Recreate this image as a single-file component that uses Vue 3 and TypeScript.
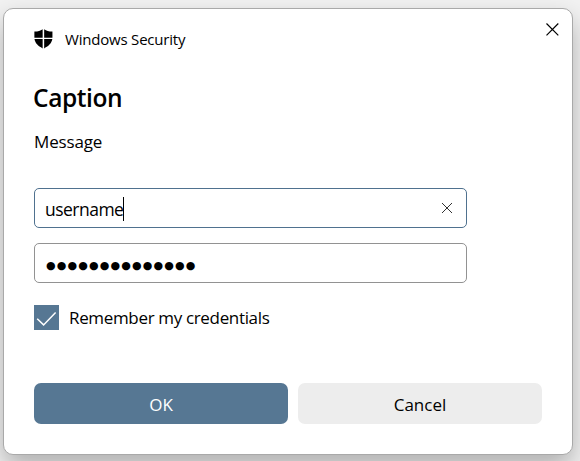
<script setup lang="ts">
import { ref } from 'vue'

const username = ref('username')
const password = ref('●'.repeat(14))
const remember = ref(true)
</script>

<template>
  <main class="desktop">
    <section class="dialog" role="dialog" aria-labelledby="caption">
      <header class="titlebar">
        <svg class="shield" viewBox="0 0 20 21" aria-hidden="true">
          <path d="M9.1.2C6.5 2 3.8 2.8.4 2.7V9.2H9.1ZM10.7.2C13.2 2 16 2.8 19.4 2.7V9.2H10.7ZM.5 10.6H9.1V20.4C4.2 17.8 1.2 15 .5 10.6ZM10.7 10.6H19.3C18.6 15 15.6 17.8 10.7 20.4Z" />
        </svg>
        <span class="title">Windows Security</span>
        <button class="close" aria-label="Close">
          <svg viewBox="0 0 14 14"><path d="M1.5 1.5L13.3 13.3M13.3 1.5L1.5 13.3" /></svg>
        </button>
      </header>
      <h1 id="caption" class="caption">Caption</h1>
      <p class="message">Message</p>
      <div class="field focused">
        <span class="value">{{ username }}</span>
        <i class="caret"></i>
        <button class="clear" aria-label="Clear">
          <svg viewBox="0 0 12 12"><path d="M1 1L11 11M11 1L1 11" /></svg>
        </button>
      </div>
      <div class="field">
        <span class="dots">{{ password }}</span>
      </div>
      <div class="remember" @click="remember = !remember">
        <span class="box" :class="{ checked: remember }">
          <svg v-if="remember" viewBox="0 0 25 25"><path d="M3.2 13.7L9.6 19.9L21.6 7.5" /></svg>
        </span>
        <span class="remember-label">Remember my credentials</span>
      </div>
      <footer class="actions">
        <button class="primary">OK</button>
        <button class="secondary">Cancel</button>
      </footer>
    </section>
  </main>
</template>

<style>
body {
  margin: 0;
  overflow: hidden;
}
</style>

<style scoped>
.desktop {
  box-sizing: border-box;
  width: 580px;
  height: 461px;
  padding: 8px 7px 6px 3px;
  overflow: hidden;
  background: #f2f2f2;
  font-family: "Open Sans", "Noto Sans", sans-serif;
  color: #000;
}
.dialog {
  box-sizing: border-box;
  height: 447px;
  padding: 0 30px;
  border: 1px solid #a9a9a9;
  border-radius: 10px;
  background: #fff;
  box-shadow: 0 12px 26px rgba(0, 0, 0, 0.28);
}
button {
  display: flex;
  align-items: center;
  justify-content: center;
  padding: 0;
  border: 0;
  background: none;
  font: inherit;
  color: inherit;
}
svg {
  display: block;
}
.titlebar {
  display: flex;
  align-items: center;
  height: 60px;
  margin-right: -18px;
}
.shield {
  width: 19px;
  height: 20px;
  margin-bottom: 1px;
}
.title {
  margin-left: 12px;
  font-size: 15px;
  letter-spacing: -0.2px;
}
.close {
  width: 14px;
  height: 14px;
  margin: 0 1px 20px auto;
}
.close svg {
  width: 14px;
  height: 14px;
  fill: none;
  stroke: #000;
  stroke-width: 1.2;
}
.caption {
  margin: 11px 0 0 -1px;
  font-size: 24.5px;
  line-height: 36px;
  font-weight: 600;
  letter-spacing: -0.4px;
}
.message {
  margin: 13px 0 0;
  font-size: 17px;
  line-height: 26px;
  letter-spacing: -0.15px;
}
.field {
  box-sizing: border-box;
  display: flex;
  align-items: center;
  width: 433px;
  height: 40px;
  margin-top: 15px;
  padding: 0 13px 0 10px;
  border: 1px solid #929292;
  border-radius: 5px;
}
.focused {
  margin-top: 33px;
  border-color: #4f718f;
}
.value {
  padding-top: 2px;
  font-size: 17.5px;
  letter-spacing: -0.52px;
}
.caret {
  width: 1px;
  height: 24px;
  margin-top: 2px;
  background: #000;
}
.clear {
  width: 12px;
  height: 12px;
  margin-left: auto;
}
.clear svg {
  width: 12px;
  height: 12px;
  fill: none;
  stroke: #333;
  stroke-width: 1;
}
.dots {
  padding: 6px 0 0 1px;
  font-family: "DejaVu Sans", sans-serif;
  font-size: 11px;
  line-height: 20px;
  letter-spacing: 1.15px;
}
.remember {
  display: flex;
  align-items: center;
  width: max-content;
  height: 25px;
  margin-top: 22px;
}
.box {
  width: 25px;
  height: 25px;
}
.checked {
  background: #567793;
}
.box svg {
  width: 25px;
  height: 25px;
  fill: none;
  stroke: #fff;
  stroke-width: 1.5;
}
.remember-label {
  margin-left: 10px;
  font-size: 17px;
  letter-spacing: -0.34px;
}
.actions {
  display: flex;
  gap: 10px;
  margin-top: 53px;
}
.actions button {
  height: 41px;
  padding-top: 2px;
  border-radius: 7px;
  font-size: 17px;
}
.actions .primary {
  width: 254px;
  background: #567793;
  color: #fff;
}
.actions .secondary {
  width: 244px;
  background: #ededed;
}
</style>
